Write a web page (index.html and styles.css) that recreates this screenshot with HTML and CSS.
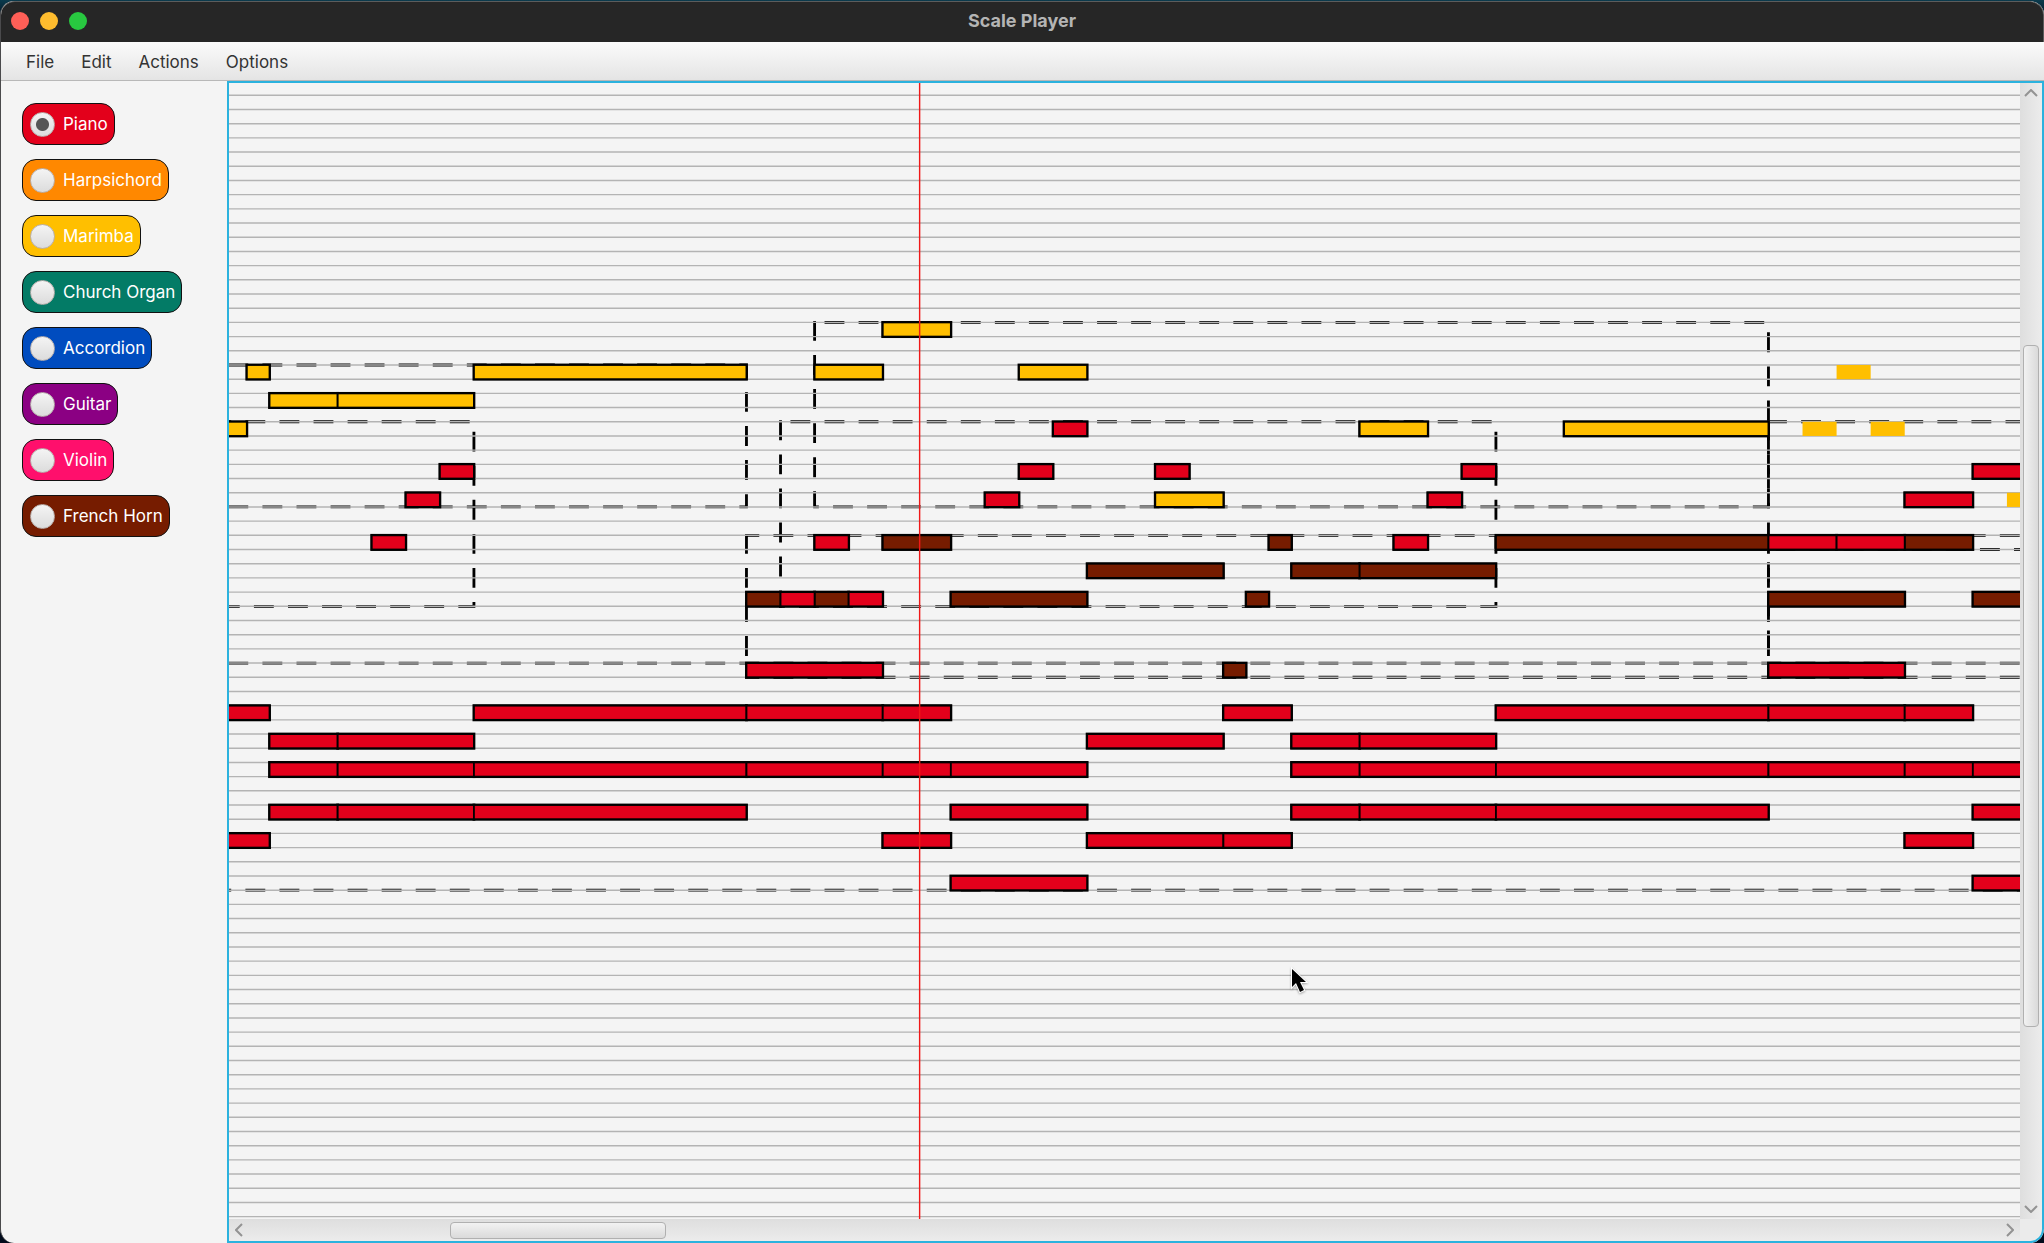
FILE: index.html
```html
<!DOCTYPE html>
<html lang="en">
<head>
<meta charset="utf-8">
<title>Scale Player</title>
<link rel="stylesheet" href="styles.css">
</head>
<body>
<div class="window">
  <header class="titlebar">
    <div class="lights">
      <button class="light close" aria-label="Close"></button>
      <button class="light minimize" aria-label="Minimize"></button>
      <button class="light zoom" aria-label="Zoom"></button>
    </div>
    <h1 class="title">Scale Player</h1>
    <div></div>
  </header>
  <nav class="menubar">
    <button class="menu">File</button>
    <button class="menu">Edit</button>
    <button class="menu">Actions</button>
    <button class="menu">Options</button>
  </nav>
  <main class="workspace">
    <form class="instruments">
      <label class="instrument bg-piano"><input type="radio" name="instrument" checked>Piano</label>
      <label class="instrument bg-harpsichord"><input type="radio" name="instrument">Harpsichord</label>
      <label class="instrument bg-marimba"><input type="radio" name="instrument">Marimba</label>
      <label class="instrument bg-organ"><input type="radio" name="instrument">Church Organ</label>
      <label class="instrument bg-accordion"><input type="radio" name="instrument">Accordion</label>
      <label class="instrument bg-guitar"><input type="radio" name="instrument">Guitar</label>
      <label class="instrument bg-violin"><input type="radio" name="instrument">Violin</label>
      <label class="instrument bg-horn"><input type="radio" name="instrument">French Horn</label>
    </form>
    <section class="pane">
      <div class="viewport">
        <svg class="roll" role="img" aria-label="Composition">
          <!-- One row is 10 units high, one half-beat is 24 units wide -->
          <g transform="translate(-27.6 12.3) scale(1.41944)">
            <g class="groups">
              <path d="M432 160v130h672v-130z"/>
              <path d="M408 230v130h504v-130z"/>
              <path d="M-240 190v100h624v-100z"/>
              <path d="M-240 230v130h432v-130z"/>
              <path d="M384 310v100h720v-100z"/>
              <path d="M1104 310v100h720v-100z"/>
              <path d="M1104 230v90h720v-90z"/>
              <path d="M-4 400h1404"/>
              <path d="M-16 560h1416"/>
            </g>
            <line class="staff" x1="700" y1="-0.5" x2="700" y2="791"/>
            <defs>
              <g id="notes">
                <g class="marimba">
                  <rect x="480" y="160" width="48" height="10"/>
                  <rect x="32" y="190" width="16" height="10"/>
                  <rect x="192" y="190" width="192" height="10"/>
                  <rect x="432" y="190" width="48" height="10"/>
                  <rect x="576" y="190" width="48" height="10"/>
                  <rect x="48" y="210" width="48" height="10"/>
                  <rect x="96" y="210" width="96" height="10"/>
                  <rect x="-16" y="230" width="48" height="10"/>
                  <rect x="816" y="230" width="48" height="10"/>
                  <rect x="960" y="230" width="144" height="10"/>
                  <rect x="672" y="280" width="48" height="10"/>
                </g>
                <g class="horn">
                  <rect x="480" y="310" width="48" height="10"/>
                  <rect x="752" y="310" width="16" height="10"/>
                  <rect x="912" y="310" width="192" height="10"/>
                  <rect x="1200" y="310" width="48" height="10"/>
                  <rect x="624" y="330" width="96" height="10"/>
                  <rect x="768" y="330" width="48" height="10"/>
                  <rect x="816" y="330" width="96" height="10"/>
                  <rect x="384" y="350" width="24" height="10"/>
                  <rect x="432" y="350" width="24" height="10"/>
                  <rect x="528" y="350" width="96" height="10"/>
                  <rect x="736" y="350" width="16" height="10"/>
                  <rect x="1104" y="350" width="96" height="10"/>
                  <rect x="1248" y="350" width="96" height="10"/>
                  <rect x="720" y="400" width="16" height="10"/>
                </g>
                <g class="piano">
                  <rect x="600" y="230" width="24" height="10"/>
                  <rect x="168" y="260" width="24" height="10"/>
                  <rect x="576" y="260" width="24" height="10"/>
                  <rect x="672" y="260" width="24" height="10"/>
                  <rect x="888" y="260" width="24" height="10"/>
                  <rect x="1248" y="260" width="48" height="10"/>
                  <rect x="144" y="280" width="24" height="10"/>
                  <rect x="552" y="280" width="24" height="10"/>
                  <rect x="864" y="280" width="24" height="10"/>
                  <rect x="1200" y="280" width="48" height="10"/>
                  <rect x="120" y="310" width="24" height="10"/>
                  <rect x="432" y="310" width="24" height="10"/>
                  <rect x="840" y="310" width="24" height="10"/>
                  <rect x="1104" y="310" width="48" height="10"/>
                  <rect x="1152" y="310" width="48" height="10"/>
                  <rect x="408" y="350" width="24" height="10"/>
                  <rect x="456" y="350" width="24" height="10"/>
                  <rect x="384" y="400" width="96" height="10"/>
                  <rect x="1104" y="400" width="96" height="10"/>
                  <rect x="0" y="430" width="48" height="10"/>
                  <rect x="192" y="430" width="192" height="10"/>
                  <rect x="384" y="430" width="96" height="10"/>
                  <rect x="480" y="430" width="48" height="10"/>
                  <rect x="720" y="430" width="48" height="10"/>
                  <rect x="912" y="430" width="192" height="10"/>
                  <rect x="1104" y="430" width="96" height="10"/>
                  <rect x="1200" y="430" width="48" height="10"/>
                  <rect x="48" y="450" width="48" height="10"/>
                  <rect x="96" y="450" width="96" height="10"/>
                  <rect x="624" y="450" width="96" height="10"/>
                  <rect x="768" y="450" width="48" height="10"/>
                  <rect x="816" y="450" width="96" height="10"/>
                  <rect x="48" y="470" width="48" height="10"/>
                  <rect x="96" y="470" width="96" height="10"/>
                  <rect x="192" y="470" width="192" height="10"/>
                  <rect x="384" y="470" width="96" height="10"/>
                  <rect x="480" y="470" width="48" height="10"/>
                  <rect x="528" y="470" width="96" height="10"/>
                  <rect x="768" y="470" width="48" height="10"/>
                  <rect x="816" y="470" width="96" height="10"/>
                  <rect x="912" y="470" width="192" height="10"/>
                  <rect x="1104" y="470" width="96" height="10"/>
                  <rect x="1200" y="470" width="48" height="10"/>
                  <rect x="1248" y="470" width="96" height="10"/>
                  <rect x="48" y="500" width="48" height="10"/>
                  <rect x="96" y="500" width="96" height="10"/>
                  <rect x="192" y="500" width="192" height="10"/>
                  <rect x="528" y="500" width="96" height="10"/>
                  <rect x="768" y="500" width="48" height="10"/>
                  <rect x="816" y="500" width="96" height="10"/>
                  <rect x="912" y="500" width="192" height="10"/>
                  <rect x="1248" y="500" width="96" height="10"/>
                  <rect x="0" y="520" width="48" height="10"/>
                  <rect x="480" y="520" width="48" height="10"/>
                  <rect x="624" y="520" width="96" height="10"/>
                  <rect x="720" y="520" width="48" height="10"/>
                  <rect x="1200" y="520" width="48" height="10"/>
                  <rect x="528" y="550" width="96" height="10"/>
                  <rect x="1248" y="550" width="96" height="10"/>
                </g>
              </g>
            </defs>
            <use href="#notes" class="outline"/>
            <use href="#notes" class="face"/>
            <g class="marimba">
              <rect x="1152" y="190" width="24" height="10"/>
              <rect x="1128" y="230" width="24" height="10"/>
              <rect x="1176" y="230" width="24" height="10"/>
              <rect x="1272" y="280" width="24" height="10"/>
            </g>
            <line class="playhead" x1="506" y1="-10" x2="506" y2="800"/>
          </g>
          <path class="cursor" d="M1063 886v18l4-4 4 9 4-2-4-8h6z"/>
        </svg>
      </div>
      <div class="scrollbar vertical">
        <button class="arrow" aria-label="Scroll up"><svg width="14" height="8"><path d="M1 7l6-6 6 6"/></svg></button>
        <div class="track"><div class="thumb"></div></div>
        <button class="arrow" aria-label="Scroll down"><svg width="14" height="8"><path d="M1 1l6 6 6-6"/></svg></button>
      </div>
      <div class="scrollbar horizontal">
        <button class="arrow" aria-label="Scroll left"><svg width="8" height="14"><path d="M7 1l-6 6 6 6"/></svg></button>
        <div class="track"><div class="thumb"></div></div>
        <button class="arrow" aria-label="Scroll right"><svg width="8" height="14"><path d="M1 1l6 6-6 6"/></svg></button>
      </div>
      <div class="corner"></div>
    </section>
  </main>
</div>
</body>
</html>
```
FILE: styles.css
```css
* { box-sizing: border-box; }

body {
  margin: 0;
  height: 100vh;
  padding: 1px 0 0 0;
  background: linear-gradient(#0b3b4d, #020b1c 20px);
  font: 17px/24px Inter, "Liberation Sans", sans-serif;
  color: #333;
  overflow: hidden;
}

button {
  margin: 0;
  padding: 0;
  border: 0;
  background: none;
  font: inherit;
  color: inherit;
}

.window {
  display: flex;
  flex-direction: column;
  height: 100%;
  border-left: 1px solid #4a4a4c;
  border-radius: 14px;
  overflow: hidden;
  background: #f4f4f4;
}

.titlebar {
  display: grid;
  grid-template-columns: 1fr auto 1fr;
  align-items: center;
  height: 41px;
  padding-bottom: 2px;
  background: #262626;
  border-top: 1px solid #5c5c5c;
  border-right: 1px solid #5c5c5c;
  border-radius: 14px 14px 0 0;
}

.lights { display: flex; gap: 11px; padding-left: 10px; }
.light { width: 18px; height: 18px; border-radius: 50%; }
.close { background: #ff5f57; }
.minimize { background: #febc2e; }
.zoom { background: #28c840; }

.title {
  margin: 0;
  font-size: 18px;
  line-height: 24px;
  font-weight: 700;
  color: #b4b4b4;
}

.menubar {
  display: flex;
  gap: 27px;
  height: 39px;
  padding: 1px 0 0 25px;
  background: linear-gradient(#fbfbfb, #e4e4e4);
  border-bottom: 1px solid #b8b8b8;
}

.workspace { display: flex; flex: 1; min-height: 0; }

.instruments {
  display: flex;
  flex-direction: column;
  align-items: flex-start;
  gap: 14px;
  width: 226px;
  padding: 22px 0 0 21px;
}

.instrument {
  display: flex;
  align-items: center;
  gap: 8px;
  height: 42px;
  padding: 0 6px 0 7px;
  border: 1px solid #111;
  border-radius: 14px;
  color: #fff;
}

.instrument input {
  appearance: none;
  width: 25px;
  height: 25px;
  margin: 0;
  border: 1px solid #b9b0ad;
  border-radius: 50%;
  background: linear-gradient(#f4f4f4, #dcdcdc);
}

.instrument input:checked {
  background: radial-gradient(circle, #555 6px, transparent 7px), linear-gradient(#f4f4f4, #dcdcdc);
}

.bg-piano { background: #e3001b; }
.bg-harpsichord { background: #ff8800; }
.bg-marimba { background: #ffbf00; }
.bg-organ { background: #037b66; }
.bg-accordion { background: #004cbf; }
.bg-guitar { background: #8b0083; }
.bg-violin { background: #ff0f6c; }
.bg-horn { background: #761c00; }

.pane {
  display: grid;
  grid-template-columns: minmax(0, 1fr) 22px;
  grid-template-rows: minmax(0, 1fr) 22px;
  flex: 1;
  min-width: 0;
  border: 2px solid #2bb2de;
  border-radius: 0 0 14px 0;
  background: #ebebeb;
  overflow: hidden;
}

.viewport { background: #f4f4f4; overflow: hidden; }
.roll { display: block; width: 100%; height: 100%; }

.groups path {
  fill: none;
  stroke: #000;
  stroke-width: 2;
  stroke-linecap: square;
  stroke-dasharray: 12 12;
}

.staff { stroke: #b4b4b4; stroke-width: 1400; stroke-dasharray: 1 9; }
.outline { stroke: #000; stroke-width: 2; }
.face { stroke: #000; stroke-width: 1.3; }
.marimba { fill: #ffbf00; }
.piano { fill: #e3001b; }
.horn { fill: #761c00; }
.playhead { stroke: #f01818; stroke-width: 1; }

.cursor {
  stroke: #fff;
  stroke-width: 2;
  paint-order: stroke;
  filter: drop-shadow(0 1px 1px #0005);
}

.scrollbar { display: flex; }
.vertical {
  flex-direction: column;
  background: linear-gradient(90deg, #dedede, #ececec);
}
.horizontal { background: linear-gradient(#dedede, #ececec); }

.arrow { display: grid; place-items: center; flex: none; width: 20px; height: 20px; }
.vertical .arrow { width: 22px; }
.horizontal .arrow { height: 22px; }
.arrow path { fill: none; stroke: #939393; stroke-width: 2; }

.track { display: grid; flex: 1; min-width: 0; min-height: 0; }
.vertical .track { grid-template-rows: 242fr 682fr 172fr; padding: 0 3px; }
.horizontal .track { grid-template-columns: 201fr 216fr 1334fr; padding: 3px 0 2px; }

.thumb { border: 1px solid #b0b0b0; border-radius: 4px; }
.vertical .thumb { grid-row: 2; background: linear-gradient(90deg, #f2f2f2, #dadada); }
.horizontal .thumb { grid-column: 2; background: linear-gradient(#f2f2f2, #dadada); }
```
